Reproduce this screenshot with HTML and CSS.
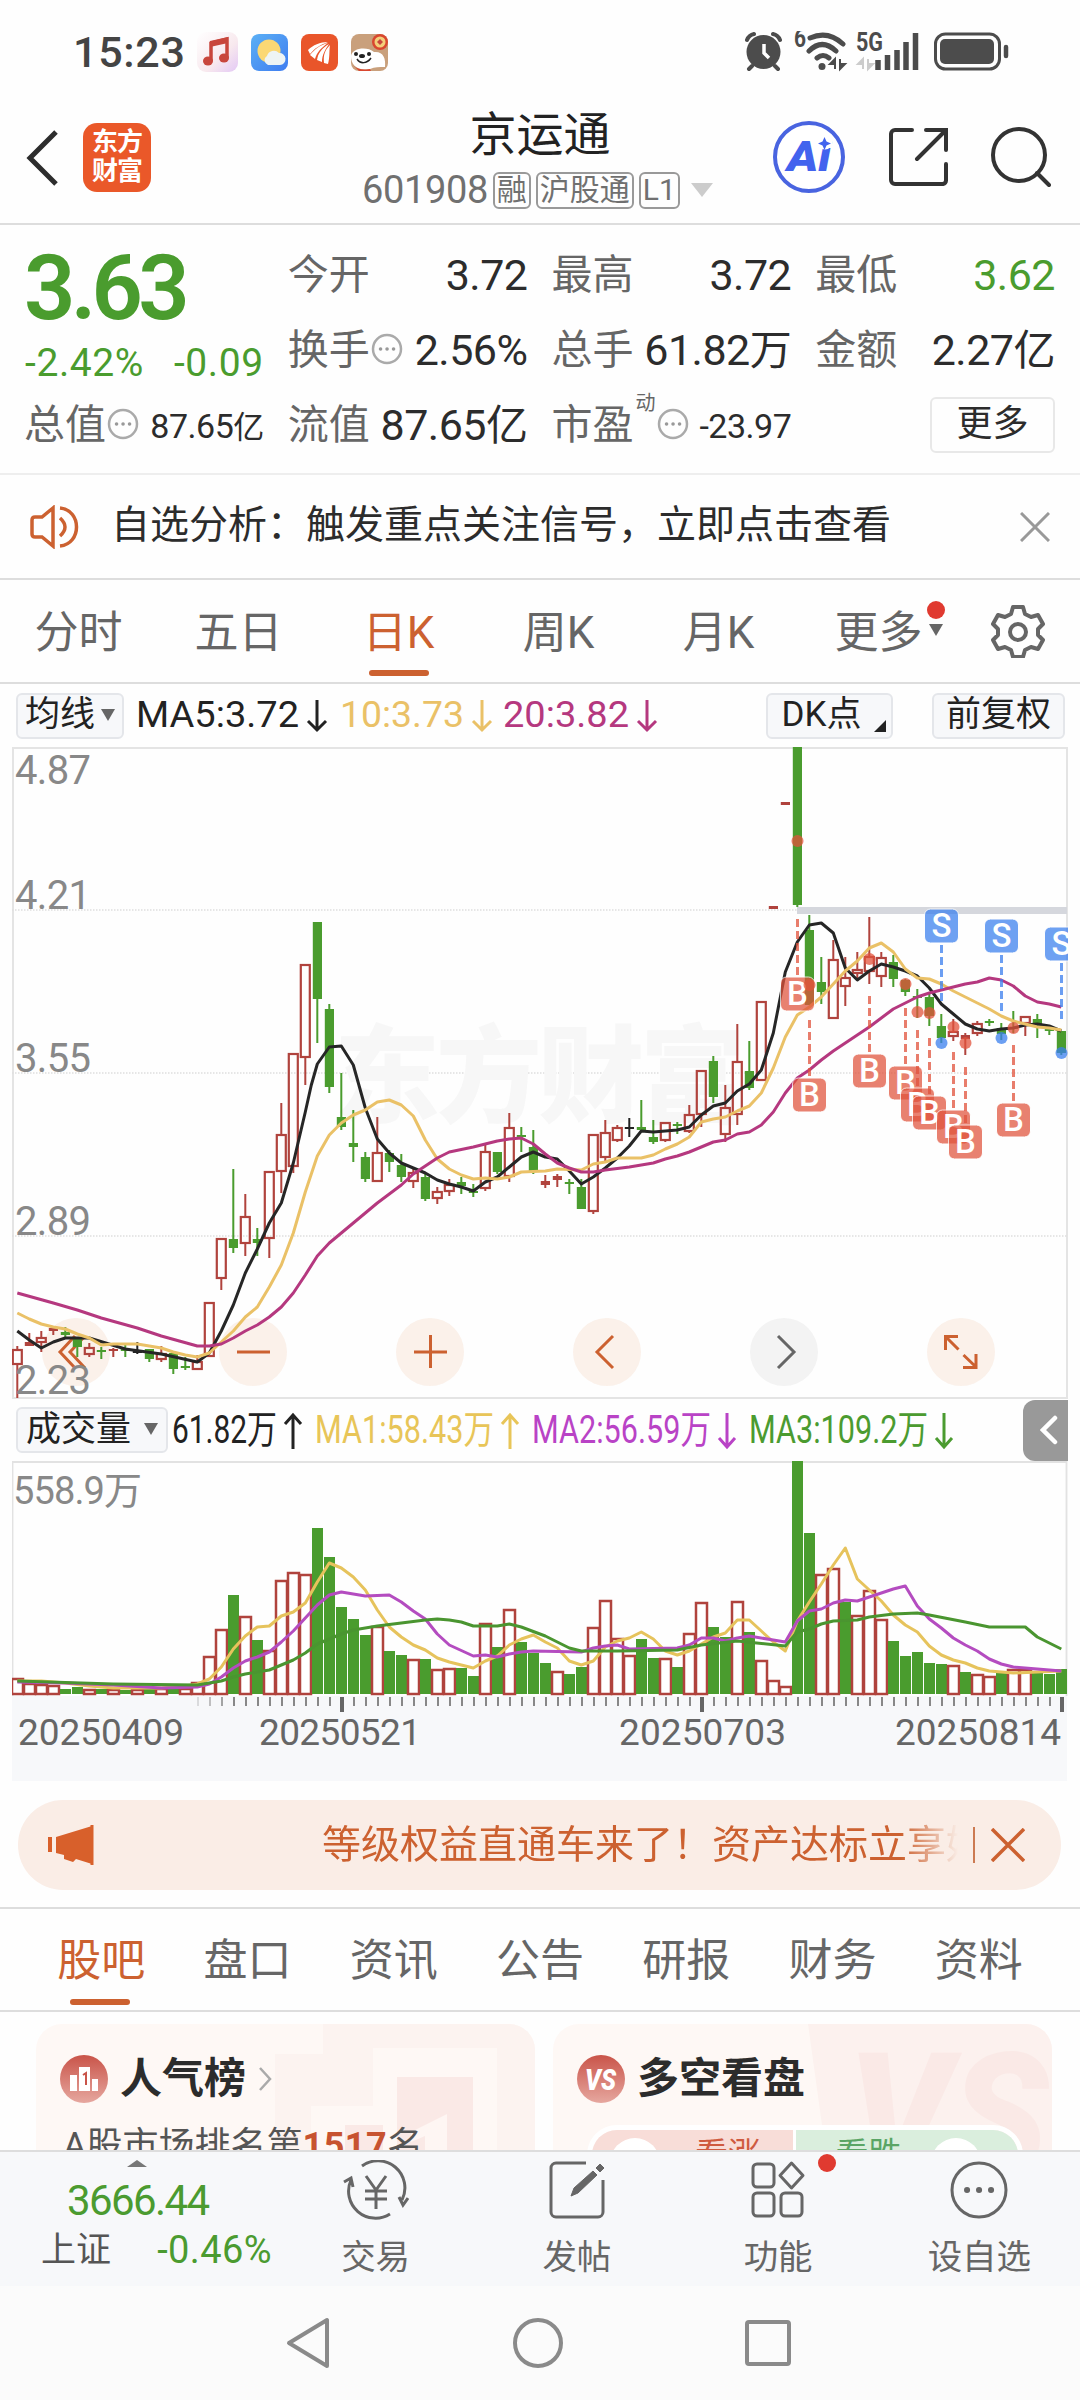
FILE: index.html
```html
<!DOCTYPE html>
<html lang="zh-CN">
<head>
  <meta charset="UTF-8">
  <title>京运通 601908</title>
  <link rel="stylesheet" href="styles.css">
</head>
<body>
  <div class="status-bar">
    <span class="time">15:23</span>
    <svg class="app-icon" width="41" height="40" viewBox="0 0 41 40">
      <defs>
        <linearGradient id="music" x1="0" y1="0" x2="1" y2="1"><stop offset="0" stop-color="#fff"/><stop offset=".6" stop-color="#f8e9ee"/><stop offset="1" stop-color="#e3c8f5"/></linearGradient>
        <linearGradient id="sky" x1="0" y1="0" x2="1" y2="1"><stop offset="0" stop-color="#5bb0f5"/><stop offset="1" stop-color="#3f7df0"/></linearGradient>
      </defs>
      <rect width="41" height="40" rx="9" fill="url(#music)"/>
      <path d="M14 29V11l16-4v19" fill="none" stroke="#c8463c" stroke-width="3.5"/>
      <path d="M13 9l18-4v6l-18 4z" fill="#c8463c"/>
      <ellipse cx="11" cy="29" rx="5" ry="4.5" fill="#c8463c"/><ellipse cx="27" cy="26" rx="5" ry="4.5" fill="#c8463c"/>
    </svg>
    <svg class="app-icon" width="37" height="37" viewBox="0 0 37 37">
      <rect width="37" height="37" rx="8" fill="url(#sky)"/>
      <circle cx="18" cy="17" r="11.5" fill="#fbd874"/>
      <path d="M17 31a5 5 0 0 1-1-9 7 7 0 0 1 12-3 6 6 0 0 1 1 12z" fill="#eef4f4"/>
    </svg>
    <svg class="app-icon" width="37" height="37" viewBox="0 0 37 37">
      <rect width="37" height="37" rx="8" fill="#e9552a"/>
      <path d="M7 16c5-5 12-8 20-8-8 3-13 6-18 12zM9 21c5-6 10-10 18-12-7 5-11 9-13 16zM16 26c1-7 5-12 12-16-4 6-7 11-7 18zM23 29c-1-8 1-13 6-18-1 6 0 12-2 19z" fill="#fff"/>
    </svg>
    <svg class="app-icon" width="37" height="37" viewBox="0 0 37 37">
      <rect width="37" height="37" rx="8" fill="#c9a07c"/>
      <circle cx="29" cy="8" r="8" fill="#d9472f"/><circle cx="29" cy="8" r="5.5" fill="#f3cf7a"/><path d="M26 8l3-3 3 3-3 3z" fill="#c8463c"/>
      <path d="M0 22c1-8 16-10 23-4 9-1 12 6 11 15-6 0-10 0-15 2C6 37 0 31 0 22z" fill="#fff"/>
      <circle cx="5" cy="20" r="2" fill="#222"/><circle cx="18" cy="20" r="2" fill="#222"/><ellipse cx="11" cy="22" rx="3" ry="2" fill="#222"/>
      <path d="M6 25c3 5 10 5 14-1" fill="none" stroke="#222" stroke-width="1.5"/><path d="M2 31c5 5 10 5 17 4l1 2H8z" fill="#d9472f"/>
    </svg>
    <svg class="status-icons" width="266" height="42" viewBox="744 30 266 42">
      <circle cx="763.500" cy="51" r="17" fill="#4c4c4c"/>
      <path d="M747 39q2-5 7-6M780 39q-2-5-7-6M752 65l-3 3M775 65l3 3" stroke="#4c4c4c" stroke-width="4" stroke-linecap="round" fill="none"/>
      <path d="M764 43v9l5 5" fill="none" stroke="#fff" stroke-width="3.500"/>
      <text x="794" y="46" class="tiny" textLength="12" lengthAdjust="spacingAndGlyphs">6</text>
      <g fill="none" stroke="#4c4c4c" stroke-width="5" stroke-linecap="round"><path d="M810 37q18-8 33 6M809 50q13-13 27 0M817 57q6-5 12 0"/></g>
      <circle cx="822" cy="65.500" r="3.500" fill="#4c4c4c"/>
      <path d="M835 68V58l-5 5h5M840 58v10l5-5h-5" fill="#4c4c4c" stroke="#4c4c4c" stroke-width="2"/>
      <text x="856" y="50" class="tiny" textLength="27" lengthAdjust="spacingAndGlyphs">5G</text>
      <path d="M863 68V58l-5 5h5M868 58v10l5-5h-5" fill="#ccc" stroke="#ccc" stroke-width="2"/>
      <path d="M878 69V59M887.500 69V54M897 69V49M906 69V41M915.500 69V32" stroke="#4c4c4c" stroke-width="5.500"/>
      <rect x="935.500" y="33" width="64" height="35" rx="10" fill="none" stroke="#4c4c4c" stroke-width="3"/>
      <rect x="940" y="38" width="54" height="25" rx="5" fill="#4c4c4c"/>
      <path d="M1006 46v9" stroke="#4c4c4c" stroke-width="4.500" stroke-linecap="round"/>
    </svg>
  </div>

  <header>
    <div class="left">
      <svg width="34" height="56" viewBox="0 0 34 56"><path d="M30 2L4 28l26 26" fill="none" stroke="#2d2d2d" stroke-width="5"/></svg>
      <div class="logo">东方<br>财富</div>
    </div>
    <div class="title">
      <h1>京运通</h1>
      <div class="code">
        <span class="num">601908</span><span class="tag">融</span><span class="tag">沪股通</span><span class="tag">L1</span><i class="tri"></i>
      </div>
    </div>
    <div class="right">
      <svg width="72" height="72" viewBox="0 0 72 72">
        <circle cx="36" cy="36" r="34" fill="#fff" stroke="#4964e0" stroke-width="4"/>
        <text x="14" y="50" class="ai" textLength="44" lengthAdjust="spacingAndGlyphs">Ai</text>
        <circle cx="52" cy="21" r="7.500" fill="#fff"/>
        <path d="M51.500 16l2 4.500 4.500 2-4.500 2-2 4.500-2-4.500-4.500-2 4.500-2z" fill="#4263ee"/>
      </svg>
      <svg width="60" height="60" viewBox="0 0 60 60"><path d="M24 3H7a4 4 0 0 0-4 4v46a4 4 0 0 0 4 4h48a4 4 0 0 0 3-4V37M38 3h20v20M57 4L29 32" fill="none" stroke="#333" stroke-width="4" stroke-linecap="round"/></svg>
      <svg width="60" height="62" viewBox="0 0 60 62"><circle cx="28" cy="29" r="26" fill="none" stroke="#333" stroke-width="4"/><path d="M46 47l12 12" stroke="#333" stroke-width="4" stroke-linecap="round"/></svg>
    </div>
  </header>

  <section class="quote">
    <div class="price">
      <div class="last">3.63</div>
      <div class="change"><span>-2.42%</span><span>-0.09</span></div>
    </div>
    <div class="cell"><label>今开</label><b>3.72</b></div>
    <div class="cell"><label>最高</label><b>3.72</b></div>
    <div class="cell"><label>最低</label><b class="green">3.62</b></div>
    <div class="cell"><label>换手<svg class="more-dot"><use href="#dots"/></svg></label><b>2.56%</b></div>
    <div class="cell"><label>总手</label><b>61.82<em>万</em></b></div>
    <div class="cell"><label>金额</label><b>2.27<em>亿</em></b></div>
    <div class="cell"><label>总值<svg class="more-dot"><use href="#dots"/></svg></label><b class="small">87.65<em>亿</em></b></div>
    <div class="cell"><label>流值</label><b>87.65<em>亿</em></b></div>
    <div class="cell"><label>市盈<sup>动</sup><svg class="more-dot"><use href="#dots"/></svg></label><b class="small">-23.97</b></div>
    <div class="cell end"><span class="more-btn">更多</span></div>
  </section>

  <div class="notice">
    <svg width="52" height="44" viewBox="0 0 52 44"><g fill="none" stroke="#cc6130" stroke-width="3.500"><path d="M24 3L13 12H6q-3 0-3 3v14q0 3 3 3h7l11 9zM31 13q10 9 0 18M31 3c22 2 22 36 0 38"/></g></svg>
    <p>自选分析：触发重点关注信号，立即点击查看</p>
    <svg width="30" height="30" viewBox="0 0 30 30"><path d="M1 1l28 28M29 1L1 29" stroke="#999" stroke-width="3"/></svg>
  </div>

  <nav class="period">
    <a>分时</a><a>五日</a><a class="active">日K</a><a>周K</a><a>月K</a><a class="more">更多<i class="tri"></i><i class="red-dot"></i></a>
    <svg width="54" height="54" viewBox="0 0 54 54"><g fill="none" stroke="#666" stroke-width="4" stroke-linejoin="round"><path d="M22 3h10l2 7 6 3 7-2 5 9-5 5v6l5 5-5 9-7-2-6 3-2 7H22l-2-7-6-3-7 2-5-9 5-5v-6l-5-5 5-9 7 2 6-3z"/><circle cx="27" cy="28" r="8"/></g></svg>
  </nav>

  <div class="legend ma">
    <span class="box ma-btn">均线<i class="tri"></i></span>
    <svg class="legend-text" width="530" height="60" viewBox="135 686 530 60">
      <text x="136" y="727" textLength="163" lengthAdjust="spacingAndGlyphs" fill="#222">MA5:3.72</text>
      <text x="340" y="727" textLength="124" lengthAdjust="spacingAndGlyphs" fill="#eac167">10:3.73</text>
      <text x="503" y="727" textLength="126" lengthAdjust="spacingAndGlyphs" fill="#b5387f">20:3.82</text>
      <g fill="none" stroke-width="3">
        <path d="M317 700v30M308 721l9 9 9-9" stroke="#222"/>
        <path d="M482 700v30M473 721l9 9 9-9" stroke="#eac167"/>
        <path d="M647 700v30M638 721l9 9 9-9" stroke="#b5387f"/>
      </g>
    </svg>
    <span class="box dk">DK点<i></i></span>
    <span class="box adj">前复权</span>
  </div>

  <div class="chart">
    <div class="controls">
      <span><svg viewBox="0 0 68 68"><path d="M33 18L18 34l15 16M43 18L28 34l15 16"/></svg></span>
      <span><svg viewBox="0 0 68 68"><path d="M18 34h33"/></svg></span>
      <span><svg viewBox="0 0 68 68"><path d="M18 34h33M34.500 17v33"/></svg></span>
      <span><svg viewBox="0 0 68 68"><path d="M40 18L24 34l16 16"/></svg></span>
      <span class="off"><svg viewBox="0 0 68 68"><path d="M28 18l16 16-16 16"/></svg></span>
      <span><svg viewBox="0 0 68 68"><path d="M31 18.500H18.500V32M18.500 18.500l13 13M36 49.500h13V36M49 49L36.500 37"/></svg></span>
    </div>
    <svg id="kline" width="1056" height="652" viewBox="12 747 1056 652"></svg>
  </div>

  <div class="legend vol">
    <span class="box vol-btn">成交量<i class="tri"></i></span>
    <svg class="legend-text" width="790" height="60" viewBox="170 1400 790 60">
      <text x="172" y="1443" textLength="105" lengthAdjust="spacingAndGlyphs" fill="#222">61.82万</text>
      <text x="315" y="1443" textLength="179" lengthAdjust="spacingAndGlyphs" fill="#e8c558">MA1:58.43万</text>
      <text x="532" y="1443" textLength="179" lengthAdjust="spacingAndGlyphs" fill="#b943c6">MA2:56.59万</text>
      <text x="749" y="1443" textLength="179" lengthAdjust="spacingAndGlyphs" fill="#4b9b30">MA3:109.2万</text>
      <g fill="none" stroke-width="3">
        <path d="M293 1449v-34M285 1424l8-9 8 9" stroke="#222"/>
        <path d="M510 1449v-34M502 1424l8-9 8 9" stroke="#e8c558"/>
        <path d="M727 1413v34M719 1438l8 9 8-9" stroke="#b943c6"/>
        <path d="M944 1413v34M936 1438l8 9 8-9" stroke="#4b9b30"/>
      </g>
    </svg>
    <span class="drawer"><svg width="18" height="30" viewBox="0 0 18 30"><path d="M15 3L3 15l12 12" fill="none" stroke="#fff" stroke-width="4.500" stroke-linecap="round"/></svg></span>
  </div>

  <div class="chart volume">
    <svg id="volume" width="1056" height="320" viewBox="12 1462 1056 320"></svg>
  </div>

  <div class="promo">
    <svg width="46" height="40" viewBox="0 0 46 40"><path d="M0 12h4v15H0zM8 12L44 1v38l-16-5-3 3-9-3v-4l-8-2z" fill="#d8602b"/><path d="M44 0v40" stroke="#d8602b" stroke-width="3"/></svg>
    <p>等级权益直通车来了！资产达标立享好礼</p>
    <span class="bar"></span>
    <svg width="34" height="34" viewBox="0 0 34 34"><path d="M1 1l32 32M33 1L1 33" stroke="#cc6130" stroke-width="3.500"/></svg>
  </div>

  <nav class="sections">
    <a class="active">股吧</a><a>盘口</a><a>资讯</a><a>公告</a><a>研报</a><a>财务</a><a>资料</a>
  </nav>

  <section class="cards">
    <div class="card">
      <svg class="deco" width="260" height="130" viewBox="0 0 260 130"><path d="M48 0h212v130H0V30h48z" fill="#fcf3f0"/><path d="M98 24h124v106H36V82h62z" fill="#fef8f5"/><path d="M122 53h76v77h-76z" fill="#fae9e6"/><path d="M70 101h38v29H70z" fill="#fae9e6"/><path d="M136 108l36-18v40h-22v-18l-14 6z" fill="#fef6f3"/></svg>
      <h2>
        <svg width="48" height="48" viewBox="0 0 48 48"><defs><linearGradient id="redDisc" x1="0" y1="0" x2="0" y2="1"><stop offset="0" stop-color="#c95449"/><stop offset="1" stop-color="#e6a79f"/></linearGradient></defs><circle cx="24" cy="24" r="24" fill="url(#redDisc)"/><path d="M10 20h7v16h-7zM19 12h11v24H19zM32 24h6v12h-6z" fill="#fff"/><path d="M23 20l3-2v12" fill="none" stroke="#c95449" stroke-width="2"/></svg>
        人气榜
        <svg width="14" height="24" viewBox="0 0 14 24"><path d="M2 1l10 11L2 23" fill="none" stroke="#aaa" stroke-width="2.500"/></svg>
      </h2>
      <p>A股市场排名第<b>1517</b>名</p>
    </div>
    <div class="card">
      <svg class="deco" width="260" height="130" viewBox="0 0 260 130"><path d="M16 0h244v130H34z" fill="#fcf1ee"/><text x="56" y="150" class="vs-big" textLength="200" lengthAdjust="spacingAndGlyphs">VS</text></svg>
      <h2>
        <svg width="48" height="48" viewBox="0 0 48 48"><circle cx="24" cy="24" r="24" fill="url(#redDisc)"/><text x="8" y="35" class="vs" textLength="31" lengthAdjust="spacingAndGlyphs">VS</text></svg>
        多空看盘
      </h2>
      <div class="vote"><span class="up"><i></i>看涨</span><span class="down">看跌<i></i></span></div>
    </div>
  </section>

  <footer>
    <div class="index">
      <i class="tri-up"></i>
      <div class="points">3666.44</div>
      <div class="row"><span>上证</span><b>-0.46%</b></div>
    </div>
    <a>
      <svg viewBox="0 0 66 60"><path d="M19 6a27 27 0 0 1 40 34M47 54A27 27 0 0 1 8 20M1 22l7-4 2 9M65 38l-5 7-4-8" /><path d="M23 16l10 14 10-14M33 30v19M22 31h22M22 39h22"/></svg>
      交易
    </a>
    <a>
      <svg viewBox="0 0 66 60"><path d="M42 3H12a5 5 0 0 0-5 5v44a5 5 0 0 0 5 5h42a5 5 0 0 0 5-5V20"/><path d="M27 36l3-8 19-17 4 4-19 18zM52 8l4-4 4 4-4 4z" fill="#666" stroke-width="1"/></svg>
      发帖
    </a>
    <a>
      <svg viewBox="0 0 66 60"><rect x="8" y="4" width="21" height="23" rx="4"/><rect x="8" y="33" width="21" height="23" rx="4"/><rect x="36" y="33" width="21" height="23" rx="4"/><path d="M46.500 3L58 15.500 46.500 28 35 15.500z" stroke-linejoin="round"/></svg>
      功能
      <i class="red-dot"></i>
    </a>
    <a>
      <svg viewBox="0 0 66 60"><circle cx="33" cy="30" r="27"/><path d="M21 30h.1M33 30h.1M45 30h.1" stroke-width="6" stroke-linecap="round"/></svg>
      设自选
    </a>
  </footer>

  <div class="sysnav">
    <svg width="46" height="52" viewBox="0 0 46 52"><path d="M42 3v46L4 26z" fill="none" stroke="#8a8a8a" stroke-width="4" stroke-linejoin="round"/></svg>
    <svg width="50" height="50" viewBox="0 0 50 50"><circle cx="25" cy="25" r="23" fill="none" stroke="#8a8a8a" stroke-width="4"/></svg>
    <svg width="46" height="46" viewBox="0 0 46 46"><rect x="2" y="2" width="42" height="42" rx="2" fill="none" stroke="#8a8a8a" stroke-width="4"/></svg>
  </div>

  <svg width="0" height="0" class="defs">
    <symbol id="dots" viewBox="0 0 32 32"><circle cx="16" cy="16" r="14" fill="none" stroke="#aaa" stroke-width="2.500"/><path d="M9.500 16h.1M16 16h.1M22.500 16h.1" stroke="#999" stroke-width="3.500" stroke-linecap="round"/></symbol>
  </svg>

  <script src="chart.js"></script>
</body>
</html>
```
FILE: chart.js
```javascript
const RED = '#b0433d', GREEN = '#4a9c2e';
const x = i => 17.3 + i * 12;

// kind, high, body top, body bottom, low
// r = hollow red, f = filled red, g = green, k = black
const candles = [
  ['r',1346,1349,1365,1398],['f',1333,1342,1346,1346],['r',1331,1337,1343,1352],['f',1326,1328,1331,1335],
  ['g',1327,1332,1335,1338],['g',1337,1338,1347,1357],['r',1343,1347,1355,1357],['g',1347,1350,1352,1359],
  ['f',1348,1349,1351,1357],['g',1345,1349,1351,1357],['k',1342,1351,1353,1354],['g',1349,1349,1359,1362],
  ['r',1346,1353,1360,1362],['g',1352,1353,1369,1374],['g',1357,1366,1368,1370],['r',1355,1361,1370,1370],
  ['r',1302,1302,1357,1357],['r',1238,1238,1279,1290],['g',1169,1239,1248,1253],['r',1194,1216,1244,1256],
  ['g',1228,1239,1243,1256],['r',1171,1171,1239,1258],['r',1103,1134,1172,1193],['r',1053,1053,1167,1173],
  ['r',964,964,1058,1085],['g',922,922,999,1043],['g',1004,1009,1087,1093],['g',1073,1117,1127,1130],
  ['g',1110,1143,1147,1162],['g',1152,1157,1179,1182],['r',1117,1152,1182,1182],['g',1150,1153,1162,1172],
  ['g',1154,1165,1177,1182],['r',1167,1172,1182,1188],['g',1173,1177,1199,1201],['r',1187,1191,1199,1204],
  ['r',1179,1184,1192,1196],['g',1177,1182,1186,1194],['g',1184,1191,1193,1197],['r',1144,1151,1189,1191],
  ['g',1152,1152,1172,1174],['r',1113,1127,1177,1182],['g',1127,1135,1137,1152],['g',1130,1147,1172,1174],
  ['f',1175,1181,1185,1188],['f',1174,1176,1180,1187],['g',1179,1182,1184,1194],['g',1179,1187,1209,1209],
  ['r',1134,1134,1212,1214],['r',1120,1132,1158,1163],['r',1125,1127,1141,1142],['k',1118,1127,1129,1137],
  ['g',1100,1127,1130,1131],['g',1120,1137,1142,1144],['r',1122,1122,1141,1142],['g',1122,1124,1126,1134],
  ['r',1105,1114,1132,1133],['r',1070,1070,1115,1127],['g',1056,1061,1097,1103],['r',1085,1107,1135,1142],
  ['r',1024,1061,1115,1125],['g',1041,1071,1088,1090],['r',1001,1001,1081,1081],['f',906,906,909,909],
  ['f',802,802,805,805],['g',747,747,905,907],['g',915,930,1005,1005],['g',957,982,992,1004],
  ['r',940,959,1019,1019],['r',957,977,987,1006],['r',952,969,974,978],['r',917,956,972,984],
  ['r',952,957,977,987],['g',955,962,979,987],['g',979,980,992,996],['g',989,996,998,1018],
  ['g',993,997,1016,1026],['g',1014,1026,1038,1043],['r',1019,1031,1037,1041],['f',1033,1035,1039,1055],
  ['r',1021,1023,1034,1036],['g',1019,1021,1023,1026],['g',1023,1028,1034,1040],['g',1011,1027,1029,1033],
  ['r',1016,1016,1024,1036],['g',1014,1019,1024,1038],['g',1029,1029,1031,1035],['g',1031,1031,1053,1055]
];

// [day, y] points of the price averages
const ma5 = [[0,1331],[1,1340],[2,1348],[3,1342],[4,1338],[6,1338],[9,1349],[12,1354],[15,1362],[16,1353],[17,1331],[18,1305],[19,1273],[20,1249],[21,1223],[22,1203],[23,1163],[24,1112],[24.5,1085],[25,1064],[26,1047],[27,1046],[28,1065],[29,1108],[30,1139],[31,1153],[32,1163],[33,1168],[34,1173],[35,1180],[36,1184],[37,1187],[38,1191],[39,1182],[40,1177],[41,1167],[42,1157],[43,1152],[44,1157],[45,1159],[46,1171],[47,1184],[48,1177],[49,1168],[50,1158],[51,1146],[52,1131],[53,1132],[54,1131],[55,1130],[56,1127],[57,1115],[58,1106],[59,1103],[60,1091],[61,1084],[62,1070],[63,1033],[64,972],[65,942],[66,925],[67,923],[68,933],[69,968],[70,980],[71,971],[72,964],[73,967],[74,971],[75,976],[76,988],[77,1004],[78,1014],[79,1024],[80,1029],[81,1031],[82,1029],[83,1028],[84,1025],[85,1024],[86,1026],[87,1031]];
const ma10 = [[0,1313],[1,1319],[2,1324],[3,1327],[4,1329],[5,1334],[6,1338],[7,1345],[8,1344],[10,1344],[11,1346],[12,1348],[13,1352],[14,1355],[15,1357],[16,1353],[17,1342],[18,1331],[19,1317],[20,1307],[21,1287],[22,1265],[23,1233],[24,1192],[25,1156],[26,1135],[27,1123],[28,1115],[29,1110],[30,1102],[31,1100],[32,1105],[33,1116],[34,1140],[35,1159],[36,1169],[37,1175],[38,1179],[39,1178],[40,1179],[41,1177],[42,1172],[44,1171],[45,1169],[47,1170],[48,1164],[49,1162],[50,1158],[52,1158],[53,1155],[54,1149],[55,1144],[56,1137],[57,1122],[58,1119],[59,1117],[60,1111],[61,1106],[62,1093],[63,1068],[64,1037],[65,1015],[66,1007],[67,997],[68,984],[69,971],[70,961],[71,948],[72,943],[73,952],[74,969],[75,978],[76,979],[77,984],[78,991],[79,997],[80,1003],[81,1009],[82,1016],[83,1021],[84,1024],[85,1027],[86,1028],[87,1030]];
const ma20 = [[0,1293],[3,1303],[5,1310],[7,1318],[10,1328],[12,1336],[15,1346],[16,1346],[17,1344],[18,1338],[19,1331],[20,1325],[21,1317],[22,1307],[23,1293],[24,1275],[25,1256],[26,1243],[27,1233],[28,1223],[29,1213],[30,1203],[31,1194],[32,1185],[33,1174],[34,1166],[35,1158],[36,1152],[38,1147],[39,1144],[40,1141],[41,1139],[42,1138],[43,1144],[44,1154],[45,1163],[46,1168],[47,1172],[48,1172],[49,1170],[51,1167],[53,1163],[54,1159],[55,1156],[56,1152],[57,1147],[58,1142],[59,1140],[60,1134],[61,1132],[62,1125],[63,1112],[64,1093],[65,1078],[66,1070],[67,1060],[68,1051],[69,1043],[70,1035],[71,1027],[72,1018],[73,1009],[74,1003],[75,997],[76,993],[77,990],[78,987],[79,984],[80,982],[81,978],[82,980],[83,986],[84,996],[85,1002],[86,1004],[87,1007]];

// type, day, badge y, dot y
const signals = [
  ['B',65,994,841],['B',66,1095,985],['B',71,1071,959],['B',74,1083,984],['B',75,1105,1012],['B',76,1113,1013],
  ['B',78,1127,1027],['B',79,1142,1043],['B',83,1120,1028],['S',77,926,1043],['S',82,936,1038],['S',87,944,1053]
];

const line = (pts, color, w = 3) =>
  `<polyline points="${pts.map(p => x(p[0]) + ',' + p[1]).join(' ')}" fill="none" stroke="${color}" stroke-width="${w}" stroke-linejoin="round"/>`;

let k = '';
[910, 1073, 1236].forEach(y => {
  k += `<path d="M12 ${y}h1055" stroke="#dedede" stroke-width="1.5" stroke-dasharray="1.5 1.5"/>`;
});
k += '<text x="334" y="1114" class="watermark" textLength="412">东方财富</text>';
k += '<rect x="797" y="907" width="270" height="7" fill="#d5d7dd"/>';

candles.forEach(([kind, high, top, bottom, low], i) => {
  const c = kind === 'g' ? GREEN : kind === 'k' ? '#222' : RED;
  const cx = x(i);
  k += `<path d="M${cx} ${high}V${top}M${cx} ${bottom}V${low}" stroke="${c}" stroke-width="2"/>`;
  if (kind === 'r') {
    k += `<rect x="${cx - 4.5}" y="${top + 1}" width="9" height="${bottom - top - 2}" fill="none" stroke="${c}" stroke-width="2.2"/>`;
  } else {
    k += `<rect x="${cx - 4.5}" y="${top}" width="9.2" height="${bottom - top}" fill="${c}"/>`;
  }
});

k += line(ma5, '#262626') + line(ma10, '#eac167') + line(ma20, '#b5387f');

signals.forEach(([type, day, y, dot]) => {
  const c = type === 'B' ? '#e1533c' : '#3a7fee';
  const cx = x(day) + 0.2;
  const dash = type === 'B' ? [y - 75, y - 18] : [y + 19, y + 75];
  k += `<circle cx="${cx}" cy="${dot}" r="6" fill="${c}" opacity=".75"/>`;
  k += `<path d="M${cx} ${dash[0]}V${dash[1]}" stroke="${c}" stroke-width="3" stroke-dasharray="8 4" opacity=".75"/>`;
  k += `<rect x="${cx - 17}" y="${y - 17}" width="34" height="34" rx="6" fill="${c}" stroke="#fff" stroke-width="1" opacity=".73"/>`;
  k += `<text x="${cx}" y="${y + 11}" class="badge">${type}</text>`;
});

[['4.87', 784], ['4.21', 909], ['3.55', 1072], ['2.89', 1235], ['2.23', 1394]].forEach(([t, y]) => {
  k += `<text x="15" y="${y}" class="scale" textLength="76">${t}</text>`;
});
document.getElementById('kline').innerHTML = k;

// volume bars, colour then top edge
const bars = 'r1679 r1684 r1685 r1686 g1690 g1688 r1690 g1690 r1690 g1691 r1690 g1690 r1689 g1689 r1689 r1683 r1657 r1630 g1596 r1617 g1641 r1651 r1581 r1573 r1575 g1529 g1558 g1608 g1620 g1636 r1627 g1652 g1656 r1660 g1660 r1670 r1669 g1669 g1677 r1624 g1648 r1610 g1643 g1654 g1664 r1672 g1675 g1668 r1628 r1601 r1639 r1656 g1640 g1659 r1659 g1668 r1634 r1603 g1628 g1638 r1602 g1633 r1661 r1681 r1687 g1462 g1534 r1575 r1569 g1603 r1616 r1591 r1620 g1642 g1657 g1653 g1664 g1665 r1666 g1673 r1675 r1677 g1674 r1670 r1670 g1673 g1675 g1670'.split(' ');

const vma1 = [[0,1682],[2,1682],[4,1684],[6,1687],[8,1689],[12,1689],[14,1687],[15,1685],[16,1680],[17,1668],[18,1650],[19,1637],[20,1628],[21,1627],[22,1617],[23,1613],[24,1604],[25,1583],[26,1564],[27,1569],[28,1578],[29,1591],[30,1611],[31,1628],[32,1638],[33,1646],[34,1651],[35,1659],[36,1663],[37,1666],[38,1669],[39,1662],[40,1657],[41,1646],[42,1640],[43,1636],[44,1643],[45,1649],[46,1662],[47,1666],[48,1662],[49,1648],[50,1642],[51,1639],[52,1633],[53,1640],[54,1652],[55,1656],[56,1652],[57,1645],[58,1638],[59,1634],[60,1621],[61,1621],[62,1632],[63,1643],[64,1652],[65,1622],[66,1603],[67,1585],[68,1566],[69,1549],[70,1580],[71,1591],[72,1602],[73,1616],[74,1626],[75,1633],[76,1647],[77,1656],[78,1661],[79,1664],[80,1669],[81,1672],[82,1673],[83,1674],[85,1673],[87,1672]];
const vma2 = [[0,1683],[4,1684],[8,1686],[12,1689],[15,1688],[16,1685],[17,1678],[18,1669],[19,1662],[20,1658],[21,1653],[22,1643],[23,1632],[24,1619],[25,1606],[26,1596],[27,1593],[29,1597],[31,1596],[32,1603],[33,1612],[34,1620],[35,1635],[36,1646],[38,1657],[39,1656],[40,1658],[41,1655],[42,1653],[43,1652],[47,1653],[48,1649],[49,1647],[50,1646],[51,1650],[55,1649],[56,1646],[57,1639],[58,1639],[59,1642],[60,1639],[61,1637],[63,1641],[64,1643],[65,1622],[66,1612],[67,1610],[68,1604],[69,1601],[70,1602],[71,1598],[73,1590],[74,1587],[75,1607],[76,1620],[77,1629],[78,1639],[79,1646],[80,1652],[81,1660],[82,1665],[83,1668],[85,1670],[87,1672]];
const vma3 = [[0,1682],[8,1685],[15,1686],[17,1682],[18,1678],[19,1675],[21,1671],[22,1666],[23,1661],[24,1654],[25,1645],[26,1640],[27,1635],[28,1631],[30,1627],[34,1621],[35,1620],[36,1621],[37,1623],[38,1627],[40,1627],[41,1625],[42,1628],[44,1637],[46,1649],[47,1652],[50,1652],[55,1651],[57,1646],[60,1642],[64,1647],[65,1633],[66,1630],[67,1625],[68,1622],[70,1621],[71,1618],[73,1615],[75,1614],[76,1616],[79,1623],[81,1628],[84,1628],[85,1638],[87,1650]];

let v = '<rect x="12" y="1697" width="1055" height="85" fill="#f7f8fa"/>';
v += '<path d="M12 1463h1055M12.5 1462v235M1066.500 1462v235" stroke="#e2e2e2" stroke-width="1.8"/>';
bars.forEach((bar, i) => {
  const top = +bar.slice(1), cx = x(i);
  if (bar[0] === 'r') {
    v += `<rect x="${cx - 5.3}" y="${top + 1}" width="11" height="${1694 - top}" fill="#fff" stroke="${RED}" stroke-width="2.5"/>`;
  } else {
    v += `<rect x="${cx - 5.3}" y="${top}" width="11" height="${1695 - top}" fill="${GREEN}"/>`;
  }
});
v += line(vma1, '#e6c35c') + line(vma2, '#b44cc0') + line(vma3, '#4a9530');

for (let i = 15; i < 88; i++) {
  const major = i % 30 === 27;
  const fade = Math.min(1, (i - 14) / 4);
  v += `<path d="M${x(i) + 0.7} 1698v${major ? 15 : 9}" stroke="${major ? '#666' : '#888'}" stroke-width="${major ? 4 : 2}" opacity="${fade}"/>`;
}
[['20250409', 18, 166], ['20250521', 259, 162], ['20250703', 619, 167], ['20250814', 895, 166]].forEach(([t, tx, w]) => {
  v += `<text x="${tx}" y="1746" class="date" textLength="${w}">${t}</text>`;
});
v += '<text x="13" y="1505" class="scale vol-max" textLength="129">558.9万</text>';
document.getElementById('volume').innerHTML = v;
```
FILE: styles.css
```css
* {
  box-sizing: border-box;
}

body {
  margin: 0;
  width: 1080px;
  height: 2400px;
  overflow: hidden;
  background: #fefefe;
  color: #2c2c2c;
  font-family: Roboto, "Noto Sans CJK SC", sans-serif;
  font-size: 40px;
  line-height: 1;
}

h1, h2, p {
  margin: 0;
  font-weight: normal;
}

svg {
  display: block;
  flex: none;
}

.defs {
  position: absolute;
}

.tri {
  display: inline-block;
  border: 7px solid transparent;
  border-top: 12px solid #666;
  border-bottom: 0;
}

.red-dot {
  position: absolute;
  width: 18px;
  height: 18px;
  border-radius: 50%;
  background: #e03a30;
}

/* status bar */
.status-bar {
  display: flex;
  align-items: center;
  height: 102px;
  padding: 2px 70px 0 73px;
}

.time {
  width: 124px;
  font-size: 43px;
  font-weight: 500;
  letter-spacing: 0.7px;
  color: #444;
}

.app-icon {
  margin-right: 13px;
}

.status-icons {
  margin-left: auto;
}

.tiny {
  font-size: 25px;
  font-weight: 700;
  fill: #4c4c4c;
}

/* header */
header {
  display: grid;
  grid-template-columns: 1fr auto 1fr;
  height: 123px;
  border-bottom: 2px solid #ddd;
}

.left {
  display: flex;
  align-items: center;
  padding: 0 0 10px 26px;
  gap: 23px;
}

.logo {
  width: 68px;
  height: 69px;
  padding-top: 5px;
  border-radius: 14px;
  background: #ea5829;
  color: #fff;
  font-size: 26px;
  font-weight: 700;
  line-height: 29px;
  letter-spacing: -1px;
  text-align: center;
}

.title {
  text-align: center;
}

h1 {
  margin-top: 5px;
  font-size: 47px;
  line-height: 56px;
  color: #222;
}

.code {
  display: flex;
  align-items: center;
  gap: 5px;
  margin: 8px 5px 0 0;
  color: #707070;
}

.code .num {
  font-size: 38px;
  letter-spacing: -0.4px;
}

.tag {
  height: 37px;
  padding: 0 2px;
  border: 2px solid #999;
  border-radius: 6px;
  font-size: 30px;
  line-height: 31px;
}

.code .tri {
  margin-left: 6px;
  border-width: 14px 11px 0;
  border-top-color: #ccc;
}

.right {
  display: flex;
  align-items: center;
  justify-content: flex-end;
  gap: 43px;
  padding: 0 29px 12px 0;
}

.ai {
  font-size: 42px;
  font-weight: 900;
  font-style: italic;
  fill: #4263ee;
}

/* quote */
.quote {
  display: grid;
  grid-template-columns: repeat(4, 1fr);
  grid-template-rows: repeat(3, 75px);
  column-gap: 25px;
  height: 250px;
  padding: 12px 25px 0 25px;
  border-bottom: 2px solid #eee;
}

.price {
  grid-row: span 2;
  color: #4a9c2e;
}

.last {
  margin: 7px 0 0 -1px;
  font-size: 90px;
  font-weight: 600;
  letter-spacing: -4.7px;
}

.change {
  display: flex;
  justify-content: space-between;
  margin-top: 10px;
  font-size: 39px;
  letter-spacing: 0.6px;
}

.cell {
  display: flex;
  align-items: center;
  justify-content: space-between;
  padding-top: 2px;
}

.cell label {
  display: flex;
  align-items: center;
  margin-left: -1px;
  font-size: 41px;
  color: #666;
}

.cell b {
  font-size: 43px;
  font-weight: normal;
  letter-spacing: -0.5px;
  white-space: nowrap;
}

.cell b.green {
  color: #4a9c2e;
}

.cell em {
  font-style: normal;
  font-size: 42px;
}

.cell b.small {
  font-size: 34px;
}

.cell .small em {
  font-size: 31px;
}

.cell sup {
  align-self: flex-start;
  margin: -12px 0 0 2px;
  font-size: 20px;
}

.more-dot {
  width: 32px;
  height: 32px;
  margin: -4px 0 0 1px;
}

.cell.end {
  justify-content: flex-end;
  padding-top: 0;
}

.more-btn {
  width: 125px;
  height: 56px;
  border: 2px solid #e8e8e8;
  border-radius: 6px;
  font-size: 36px;
  line-height: 50px;
  text-align: center;
}

/* notice */
.notice {
  display: flex;
  align-items: center;
  height: 105px;
  padding: 0 30px 0 29px;
  border-bottom: 2px solid #ddd;
}

.notice p {
  flex: 1;
  padding: 0 0 2px 30px;
  font-size: 39px;
}

/* tabs */
.period {
  display: flex;
  align-items: center;
  height: 104px;
  border-bottom: 2px solid #ddd;
}

.period a {
  position: relative;
  width: 160px;
  padding: 3px 3px 0 0;
  font-size: 44px;
  text-align: center;
  color: #666;
}

.period svg {
  margin-left: 31px;
}

.period .active,
.sections .active {
  color: #cc6130;
}

.period .active::after,
.sections .active::after {
  content: "";
  position: absolute;
  left: 50%;
  bottom: -21px;
  width: 60px;
  height: 6px;
  margin-left: -31px;
  border-radius: 3px;
  background: #cc6130;
}

.period .more .tri {
  position: absolute;
  left: 129px;
  top: 16px;
}

.period .red-dot {
  left: 127px;
  top: -7px;
}

/* chart legends */
.legend {
  display: flex;
  align-items: center;
  height: 63px;
  padding-left: 16px;
}

.legend-text text {
  font-size: 37px;
}

.box {
  display: flex;
  align-items: center;
  justify-content: center;
  gap: 6px;
  height: 46px;
  padding-bottom: 2px;
  border: 2px solid #e4e6ea;
  border-radius: 6px;
  background: #f7f8fa;
  font-size: 35px;
  white-space: nowrap;
  color: #222;
}

.ma-btn {
  width: 108px;
}

.ma .legend-text {
  margin-left: 11px;
}

.dk {
  position: relative;
  width: 127px;
  margin-left: 101px;
  padding-right: 16px;
}

.dk i {
  position: absolute;
  right: 5px;
  bottom: 5px;
  border-left: 12px solid transparent;
  border-bottom: 12px solid #222;
}

.adj {
  width: 133px;
  margin-left: 39px;
}

/* charts */
.chart {
  position: relative;
  width: 1056px;
  height: 652px;
  margin-left: 12px;
  outline: 2px solid #e4e4e4;
  outline-offset: -2px;
}

/* candles are drawn over the round buttons */
.chart > svg {
  position: relative;
  z-index: 1;
}

.scale {
  font-size: 40px;
  fill: #888;
}

.vol-max {
  font-size: 38px;
}

.date {
  font-size: 37px;
  fill: #666;
}

.watermark {
  font-size: 106px;
  font-weight: 900;
  fill: #f7f7f7;
}

.badge {
  font-size: 33px;
  font-weight: 500;
  text-anchor: middle;
  fill: #fff;
}

.controls {
  position: absolute;
  left: 30px;
  top: 571px;
  display: flex;
  gap: 109px;
}

.controls span {
  width: 68px;
  height: 68px;
  border-radius: 50%;
  background: rgba(249, 232, 220, 0.6);
}

.controls svg {
  fill: none;
  stroke: #cc6130;
  stroke-width: 3;
}

.controls .off {
  background: #f3f3f3;
}

.controls .off svg {
  stroke: #666;
}

.vol-btn {
  width: 152px;
  gap: 13px;
}

.vol .legend-text {
  margin-left: 2px;
}

.vol .legend-text text {
  font-size: 39px;
}

.vol {
  height: 62px;
}

.drawer {
  display: flex;
  align-items: center;
  justify-content: center;
  width: 45px;
  height: 61px;
  margin-left: 63px;
  padding-left: 6px;
  border-radius: 12px 0 0 12px;
  background: #999;
}

.volume {
  height: 321px;
  outline: none;
}

/* promo */
.promo {
  display: flex;
  align-items: center;
  height: 90px;
  margin: 18px 19px 17px 18px;
  padding: 0 36px 0 30px;
  border-radius: 45px;
  background: #faede6;
}

.promo p {
  width: 636px;
  margin: 0 0 0 228px;
  overflow: hidden;
  font-size: 39px;
  line-height: 50px;
  white-space: nowrap;
  color: #cc6130;
  -webkit-mask-image: linear-gradient(to right, #000 91%, transparent);
  mask-image: linear-gradient(to right, #000 91%, transparent);
}

.bar {
  width: 2px;
  height: 36px;
  margin: 0 16px 0 auto;
  background: #cc7a52;
}

.sections {
  display: flex;
  align-items: center;
  height: 105px;
  padding: 0 28px;
  border-top: 2px solid #ddd;
  border-bottom: 2px solid #ddd;
}

.sections a {
  position: relative;
  flex: 1;
  padding-top: 2px;
  font-size: 44px;
  text-align: center;
  color: #666;
}

.sections .active::after {
  bottom: -22px;
}

/* cards */
.cards {
  display: grid;
  grid-template-columns: 1fr 1fr;
  gap: 18px;
  height: 138px;
  padding: 12px 28px 0 36px;
  overflow: hidden;
}

.card {
  position: relative;
  height: 200px;
  padding: 31px 24px;
  border-radius: 26px;
  overflow: hidden;
  background: #fef8f5;
}

.deco {
  position: absolute;
  right: 0;
  top: 0;
}

.vs-big {
  font-size: 170px;
  font-weight: 900;
  font-style: italic;
  fill: #fae9e6;
}

.vs {
  font-size: 30px;
  font-weight: 900;
  font-style: italic;
  fill: #fff;
}

h2 {
  position: relative;
  display: flex;
  align-items: center;
  gap: 12px;
  font-size: 42px;
  font-weight: 700;
}

.card p {
  position: relative;
  margin-top: 23px;
  padding-left: 3px;
  font-size: 36px;
  line-height: 40px;
  color: #555;
}

.card p b {
  letter-spacing: 0.5px;
  color: #c75330;
}

.vote {
  position: relative;
  display: flex;
  width: 436px;
  height: 70px;
  margin: 22px 0 0 10px;
  border: 5px solid #fff;
  border-radius: 30px;
  overflow: hidden;
  font-size: 33px;
  line-height: 33px;
}

.vote span {
  display: flex;
  flex: 1;
  padding-top: 8px;
}

.vote i {
  width: 50px;
  height: 50px;
  border-radius: 50%;
  background: #fff;
}

.up {
  gap: 35px;
  padding-left: 18px;
  border-right: 3px solid #fff;
  background: #f8ddd8;
  color: #cf5a40;
}

.down {
  gap: 29px;
  padding-left: 40px;
  background: #daeedd;
  color: #5aa565;
}

/* bottom bar */
footer {
  display: flex;
  height: 136px;
  border-top: 2px solid #ddd;
  background: #f7f8fa;
}

.index {
  width: 275px;
  padding: 8px 3px 0 41px;
}

.tri-up {
  display: block;
  width: 0;
  margin-left: 86px;
  border: 10px solid transparent;
  border-top: 0;
  border-bottom: 7px solid #777;
}

.points {
  margin: 13px 0 0 26px;
  font-size: 42px;
  letter-spacing: -1.6px;
  color: #4b9b30;
}

.index .row {
  display: flex;
  align-items: center;
  justify-content: space-between;
  margin-top: 9px;
  font-size: 35px;
  color: #555;
}

.index b {
  font-size: 38px;
  font-weight: normal;
  letter-spacing: 0.4px;
  color: #4b9b30;
}

footer a {
  position: relative;
  flex: 1;
  padding-top: 8px;
  font-size: 34.5px;
  text-align: center;
  color: #666;
}

footer a svg {
  width: 66px;
  height: 60px;
  margin: 0 auto 20px;
  fill: none;
  stroke: #666;
  stroke-width: 3;
}

footer .red-dot {
  left: 140px;
  top: 2px;
}

.sysnav {
  display: flex;
  align-items: center;
  height: 114px;
  padding-left: 285px;
  gap: 182px;
  background: #fbfbfb;
}
```
